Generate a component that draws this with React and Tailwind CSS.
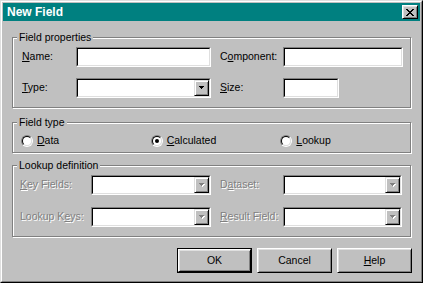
const face = "#c0c0c0";

function Sunken({ w, children }) {
  return (
    <div className={`h-[20px] border border-t-[#808080] border-l-[#808080] border-r-white border-b-white ${w}`}>
      <div className="h-full w-full bg-white border border-t-black border-l-black border-r-[#dfdfdf] border-b-[#dfdfdf] flex justify-end">
        {children}
      </div>
    </div>
  );
}

function Arrow({ disabled }) {
  const d = "M0 0h5v1h-1v1h-1v1h-1v-1h-1v-1h-1z";
  return (
    <svg width="6" height="4" viewBox="0 0 6 4">
      {disabled && <path d={d} fill="#fff" transform="translate(1 1)" />}
      <path d={d} fill={disabled ? "#808080" : "#000"} />
    </svg>
  );
}

function Combo({ w, disabled }) {
  return (
    <Sunken w={w}>
      <div className="w-[15px] h-full bg-[#c0c0c0] border border-t-[#dfdfdf] border-l-[#dfdfdf] border-r-black border-b-black shadow-[inset_1px_1px_0_#fff,inset_-1px_-1px_0_#808080] flex items-center justify-center">
        <Arrow disabled={disabled} />
      </div>
    </Sunken>
  );
}

function Group({ title, h, children }) {
  return (
    <div className={`relative mx-[9px] border border-[#808080] shadow-[inset_1px_1px_0_#fff,1px_1px_0_#fff] ${h}`}>
      <span className="absolute left-[4px] top-[-7px] px-[2px] bg-[#c0c0c0] leading-[12px]">{title}</span>
      {children}
    </div>
  );
}

function Radio({ checked, children }) {
  return (
    <div className="w-[130px] flex items-center">
      <span className="w-[12px] h-[12px] rounded-full border border-t-[#808080] border-l-[#808080] border-r-white border-b-white">
        <span className="w-full h-full rounded-full bg-white border border-t-black border-l-black border-r-[#dfdfdf] border-b-[#dfdfdf] flex items-center justify-center">
          {checked && <span className="w-[4px] h-[4px] rounded-full bg-black" />}
        </span>
      </span>
      <span className="ml-[4px]">{children}</span>
    </div>
  );
}

function Button({ children, isDefault }) {
  const inner = (
    <div className="w-full h-full bg-[#c0c0c0] border border-t-white border-l-white border-r-black border-b-black shadow-[inset_1px_1px_0_#dfdfdf,inset_-1px_-1px_0_#808080] flex items-center justify-center">
      {children}
    </div>
  );
  if (isDefault) {
    return <div className="w-[75px] h-[25px] border border-black">{inner}</div>;
  }
  return <div className="w-[75px] h-[25px]">{inner}</div>;
}

const dim = "text-[#808080] [text-shadow:1px_1px_0_#fff]";

export default function App() {
  return (
    <div className="w-[423px] h-[283px] border border-t-[#dfdfdf] border-l-[#dfdfdf] border-r-black border-b-black font-['Liberation_Sans',Arial,sans-serif] text-[10.5px] text-black select-none">
      <div className="h-full border border-t-white border-l-white border-r-[#808080] border-b-[#808080] p-[1px] bg-[#c0c0c0]">
        {/* title bar */}
        <div className="h-[18px] bg-[#008080] flex items-center justify-between pl-[4px] pr-[2px]">
          <span className="text-white font-bold text-[12px]">New Field</span>
          <div className="w-[16px] h-[14px] bg-[#c0c0c0] border border-t-white border-l-white border-r-black border-b-black shadow-[inset_1px_1px_0_#dfdfdf,inset_-1px_-1px_0_#808080] flex items-center justify-center">
            <svg width="8" height="7" viewBox="0 0 8 7" fill="#000">
              <path d="M0 0h2v1H0zM6 0h2v1H6zM1 1h2v1H1zM5 1h2v1H5zM2 2h4v1H2zM3 3h2v1H3zM2 4h4v1H2zM1 5h2v1H1zM5 5h2v1H5zM0 6h2v1H0zM6 6h2v1H6z" />
            </svg>
          </div>
        </div>

        <div className="mt-[16px]">
          <Group title="Field properties" h="h-[71px]">
            <div className="pt-[9px] pl-[9px] flex flex-col gap-[11px]">
              <div className="flex items-center">
                <span className="w-[54px]"><u>N</u>ame:</span>
                <Sunken w="w-[135px]" />
                <span className="ml-[9px] w-[63px]">C<u>o</u>mponent:</span>
                <Sunken w="w-[120px]" />
              </div>
              <div className="flex items-center">
                <span className="w-[54px]"><u>T</u>ype:</span>
                <Combo w="w-[135px]" />
                <span className="ml-[9px] w-[63px]"><u>S</u>ize:</span>
                <Sunken w="w-[56px]" />
              </div>
            </div>
          </Group>
        </div>

        <div className="mt-[14px]">
          <Group title="Field type" h="h-[31px]">
            <div className="pt-[10px] pl-[8px] flex items-center">
              <Radio><u>D</u>ata</Radio>
              <Radio checked><u>C</u>alculated</Radio>
              <Radio><u>L</u>ookup</Radio>
            </div>
          </Group>
        </div>

        <div className="mt-[12px]">
          <Group title="Lookup definition" h="h-[72px]">
            <div className="pt-[9px] pl-[7px] flex flex-col gap-[12px]">
              <div className="flex items-center">
                <span className={`w-[71px] ${dim}`}><u>K</u>ey Fields:</span>
                <Combo w="w-[120px]" disabled />
                <span className={`ml-[9px] w-[63px] ${dim}`}>D<u>a</u>taset:</span>
                <Combo w="w-[119px]" disabled />
              </div>
              <div className="flex items-center">
                <span className={`w-[71px] ${dim}`}>Lookup K<u>e</u>ys:</span>
                <Combo w="w-[120px]" disabled />
                <span className={`ml-[9px] w-[63px] ${dim}`}><u>R</u>esult Field:</span>
                <Combo w="w-[119px]" disabled />
              </div>
            </div>
          </Group>
        </div>

        <div className="mt-[11px] flex justify-end gap-[5px] pr-[8px]">
          <Button isDefault>OK</Button>
          <Button>Cancel</Button>
          <Button><u>H</u>elp</Button>
        </div>
      </div>
    </div>
  );
}
